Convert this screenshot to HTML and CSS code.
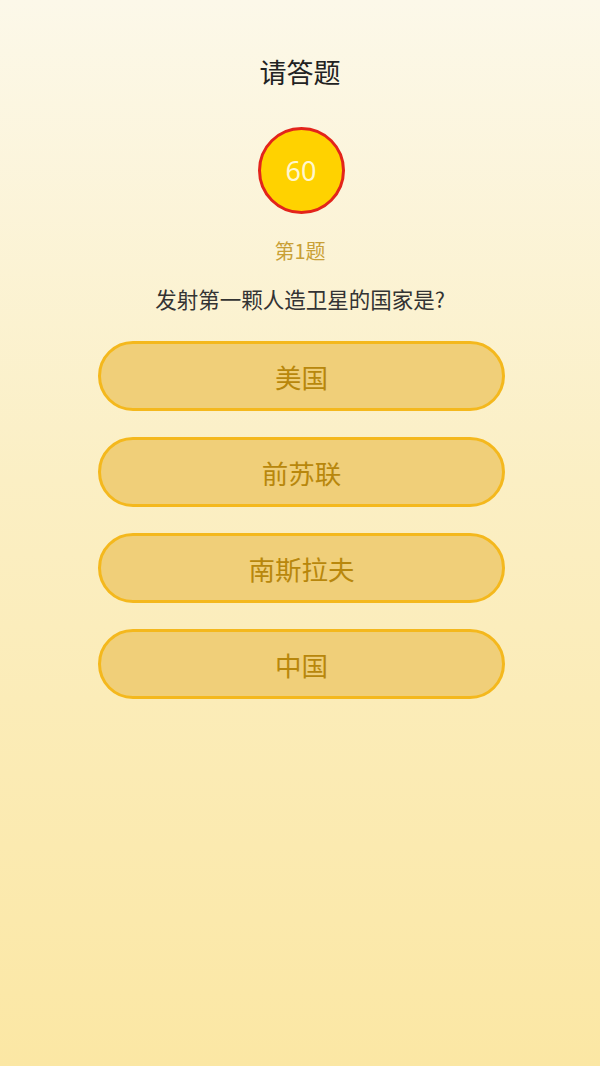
FILE: index.html
```html
<!DOCTYPE html>
<html>
<head>
  <meta charset="utf-8">
  <title>请答题</title>
  <link rel="stylesheet" href="styles.css">
</head>
<body>
  <div class="page">
    <h1 class="title">请答题</h1>
    <div class="timer">60</div>
    <div class="q-num">第1题</div>
    <p class="question">发射第一颗人造卫星的国家是?</p>
    <div class="options">
      <button class="option">美国</button>
      <button class="option">前苏联</button>
      <button class="option">南斯拉夫</button>
      <button class="option">中国</button>
    </div>
  </div>
</body>
</html>
```

FILE: styles.css
```css
html, body {
  margin: 0;
  padding: 0;
}
body {
  font-family: "Noto Sans CJK SC", "Noto Sans", sans-serif;
  background: linear-gradient(to bottom, #fcf8e9 0%, #fbefc4 45%, #fbe7a4 100%);
  min-height: 1066px;
  color: #333;
}
.page {
  display: flex;
  flex-direction: column;
  align-items: center;
  padding-top: 52px;
}
.title {
  margin: 0;
  font-size: 27px;
  font-weight: normal;
  line-height: 40px;
  color: #222;
}
.timer {
  margin-top: 35px;
  margin-left: 2px;
  width: 81px;
  height: 81px;
  border: 3px solid #e3241b;
  border-radius: 50%;
  background: #ffd200;
  color: #fff7cf;
  font-family: "Noto Sans", sans-serif;
  font-size: 27px;
  display: flex;
  align-items: center;
  justify-content: center;
}
.q-num {
  margin-top: 22px;
  font-size: 20px;
  line-height: 30px;
  color: #c9a036;
}
.question {
  margin: 18px 0 0;
  font-size: 21.5px;
  line-height: 30px;
  color: #333;
}
.options {
  margin-top: 27px;
  display: flex;
  flex-direction: column;
  gap: 26px;
  margin-left: 3px;
}
.option {
  width: 407px;
  height: 70px;
  border: 3px solid #f4b81d;
  border-radius: 35px;
  background: #f0cf79;
  color: #b8870c;
  font-family: "Noto Sans CJK SC", sans-serif;
  font-size: 26.5px;
  cursor: pointer;
}
```
